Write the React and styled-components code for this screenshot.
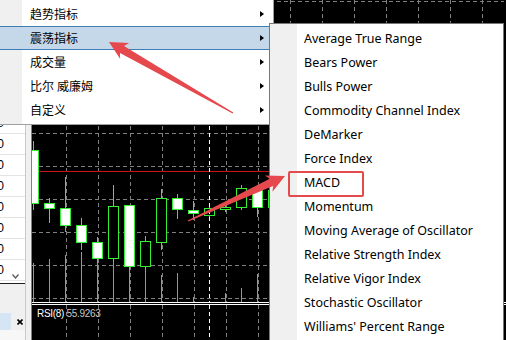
import React from 'react';
import styled, { createGlobalStyle, css } from 'styled-components';

const GlobalStyle = createGlobalStyle`
  html, body {
    margin: 0;
    padding: 0;
    background: #f0f0f0;
  }
  * { box-sizing: border-box; }
`;

const Screen = styled.div`
  position: relative;
  width: 506px;
  height: 340px;
  overflow: hidden;
  font-family: "Noto Sans", "Noto Sans CJK SC", sans-serif;
`;

const Workspace = styled.div`
  display: flex;
  height: 100%;
`;

/* left navigator pane, mostly cut off */
const SidePane = styled.div`
  width: 26px;
  display: flex;
  flex-direction: column;
  background: #f0f0f0;
  border-right: 1px solid #c9c9c9;
`;

const PriceList = styled.div`
  position: relative;
  height: 284px;
  padding-top: 113px;
  background: #fff;
  border-bottom: 1px solid #1e1e1e;
  overflow: hidden;
`;

const PriceRow = styled.div`
  height: 21px;
  display: flex;
  align-items: center;
  justify-content: flex-end;
  padding-right: 21px;
  border-bottom: 1px solid #e3e3e3;
  font: 12px "Liberation Sans", sans-serif;
  color: #000;
  white-space: nowrap;
`;

const ScrollDown = styled.svg`
  position: absolute;
  right: 6px;
  bottom: 4px;
`;

const TabStrip = styled.div`
  flex: 1;
  display: flex;
  flex-direction: column;
  padding-top: 29px;
`;

const Tab = styled.div`
  height: 17px;
  display: flex;
  align-items: center;
  gap: 6px;
`;

const TabBox = styled.div`
  width: 11px;
  height: 100%;
  background: #d5e5f4;
`;

const TabFoot = styled.div`
  flex: 1;
  background: #f7f7f7;
`;

const Splitter = styled.div`
  width: 5px;
  background: #f0f0f0;
`;

const ChartFrame = styled.div`
  flex: 1;
  display: flex;
  flex-direction: column;
  background: #000;
  border-left: 1px solid #7f7f7f;
`;

const MainChart = styled.div`
  height: 303px;
  border-bottom: 1px solid #fff;
  svg { display: block; }
`;

const RsiPane = styled.div`
  position: relative;
  flex: 1;
  margin-top: 1px;
  border-top: 1px solid #fff;
  svg { display: block; }
`;

const RsiLabel = styled.span`
  position: absolute;
  left: 5px;
  top: 3px;
  font: 10px "Liberation Sans", sans-serif;
  letter-spacing: -0.3px;
  color: #fff;
  span { color: #c8c8c8; }
`;

/* context menus */
const Menu = styled.ul`
  position: absolute;
  left: ${p => p.$left}px;
  top: ${p => p.$top}px;
  width: ${p => p.$width}px;
  margin: 0;
  padding: 2px 0;
  list-style: none;
  background: linear-gradient(to right, #f0f0f0 ${p => p.$gutter}px, #fff ${p => p.$gutter}px);
  ${p => p.$sub
    ? css`border: 1px solid #777;`
    : css`
      border-right: 1px solid #a0a0a0;
      border-bottom: 1px solid #a0a0a0;
    `}
`;

const MenuItem = styled.li`
  position: relative;
  height: 24px;
  display: flex;
  align-items: center;
  padding-left: ${p => p.$indent}px;
  padding-right: 9px;
  font-size: ${p => p.$size}px;
  color: #000;
  white-space: nowrap;
  ${p => p.$active && css`
    background: #c5d8ea;
    border-top: 1px solid #3d7eb3;
    border-bottom: 1px solid #3d7eb3;
  `}
  ${p => p.$marked && css`
    &::after {
      content: "";
      position: absolute;
      left: 18px;
      top: 1px;
      width: 72px;
      height: 22px;
      border: 2.5px solid #e34a4c;
      border-radius: 2px;
    }
  `}
`;

const SubArrow = styled.i`
  margin-left: auto;
  width: 0;
  height: 0;
  border-left: 4px solid #000;
  border-top: 3.5px solid transparent;
  border-bottom: 3.5px solid transparent;
`;

const Annotations = styled.svg`
  position: absolute;
  left: 0;
  top: 0;
  pointer-events: none;
`;

const prices = ['1.32480', '1.32450', '1.32420', '1.32390', '1.32360', '1.32330', '1.32300', '1.32270', '1.32240'];

const groups = [
  { label: '趋势指标' },
  { label: '震荡指标', active: true },
  { label: '成交量' },
  { label: '比尔 威廉姆' },
  { label: '自定义' },
];

const oscillators = [
  'Average True Range',
  'Bears Power',
  'Bulls Power',
  'Commodity Channel Index',
  'DeMarker',
  'Force Index',
  'MACD',
  'Momentum',
  'Moving Average of Oscillator',
  'Relative Strength Index',
  'Relative Vigor Index',
  'Stochastic Oscillator',
  "Williams' Percent Range",
];

// c: centre x, hi/lo: wick, top/bot: body, up: hollow white body
const candles = [
  { c: 33, hi: 141, lo: 210, top: 150, bot: 203, up: true },
  { c: 49, hi: 198, lo: 223, top: 203, bot: 208, up: true },
  { c: 65, hi: 177, lo: 232, top: 208, bot: 225, up: true },
  { c: 81, hi: 218, lo: 250, top: 225, bot: 242, up: true },
  { c: 97, hi: 237, lo: 262, top: 242, bot: 258, up: true },
  { c: 113, hi: 185, lo: 262, top: 206, bot: 258, up: false },
  { c: 129, hi: 205, lo: 270, top: 205, bot: 266, up: true },
  { c: 145, hi: 236, lo: 270, top: 241, bot: 266, up: false },
  { c: 161, hi: 189, lo: 250, top: 198, bot: 242, up: false },
  { c: 177, hi: 194, lo: 219, top: 198, bot: 209, up: true },
  { c: 193, hi: 201, lo: 220, top: 210, bot: 213, up: true },
  { c: 209, hi: 205, lo: 218, top: 208, bot: 215, up: false },
  { c: 225, hi: 204, lo: 212, top: 207, bot: 209, up: false },
  { c: 241, hi: 185, lo: 210, top: 188, bot: 207, up: false },
  { c: 257, hi: 185, lo: 217, top: 190, bot: 207, up: true },
  { c: 273, hi: 180, lo: 215, top: 190, bot: 207, up: false },
];

const volumes = [[33, 263], [49, 259], [65, 255], [81, 252], [97, 258], [113, 258], [129, 266], [145, 266],
  [161, 275], [177, 273], [193, 297], [225, 293], [241, 288], [257, 274]];

const gridX = Array.from({ length: 14 }, (_, i) => 66 + i * 32);
const gridY = Array.from({ length: 10 }, (_, i) => 1 + i * 33);

function arrowPoints([sx, sy], [tx, ty], head = 18, wing = 9, neck = 4, tail = 0.6, notch = 3) {
  const len = Math.hypot(tx - sx, ty - sy);
  const ux = (tx - sx) / len, uy = (ty - sy) / len;
  const nx = -uy, ny = ux;
  const p = (d, w) => [tx - ux * d + nx * w, ty - uy * d + ny * w];
  return [
    [tx, ty], p(head, wing), p(head - notch, neck),
    [sx + nx * tail, sy + ny * tail], [sx - nx * tail, sy - ny * tail],
    p(head - notch, -neck), p(head, -wing),
  ].map(q => q.map(v => v.toFixed(1)).join(',')).join(' ');
}

function CandleChart() {
  return (
    <svg width="472" height="302" viewBox="32 0 472 302" shapeRendering="crispEdges">
      {gridY.map(y => (
        <line key={y} x1="32" x2="504" y1={y + 0.5} y2={y + 0.5} stroke="#808080" strokeDasharray="4 3" />
      ))}
      {gridX.map(x => (
        <line key={x} x1={x + 0.5} x2={x + 0.5} y1="0" y2="302" stroke="#808080" strokeDasharray="4 3" />
      ))}
      <line x1="32" x2="504" y1="171.5" y2="171.5" stroke="#c81414" />
      {volumes.map(([x, y]) => (
        <line key={x} x1={x + 0.5} x2={x + 0.5} y1={y} y2="302" stroke="#3fd43f" />
      ))}
      {candles.map(k => (
        <g key={k.c} stroke="#33f033">
          <line x1={k.c + 0.5} x2={k.c + 0.5} y1={k.hi} y2={k.lo} />
          <rect x={k.c - 5 + 0.5} y={k.top + 0.5} width="10" height={Math.max(k.bot - k.top, 1)}
            fill={k.up ? '#fff' : '#000'} />
        </g>
      ))}
      <line x1="209.5" x2="209.5" y1="0" y2="302" stroke="#fff" strokeDasharray="4 3" />
    </svg>
  );
}

function RsiGrid() {
  return (
    <svg width="472" height="34" viewBox="32 306 472 34" shapeRendering="crispEdges">
      {gridX.map(x => (
        <line key={x} x1={x + 0.5} x2={x + 0.5} y1="306" y2="340" stroke="#808080" strokeDasharray="4 3" />
      ))}
      <line x1="209.5" x2="209.5" y1="306" y2="340" stroke="#fff" strokeDasharray="4 3" />
    </svg>
  );
}

export default function App() {
  return (
    <Screen>
      <GlobalStyle />
      <Workspace>
        <SidePane>
          <PriceList>
            {prices.map(p => <PriceRow key={p}>{p}</PriceRow>)}
            <ScrollDown width="7" height="5" viewBox="0 0 7 5">
              <polyline points="0.5,0.5 3.5,4 6.5,0.5" fill="none" stroke="#555" strokeWidth="1.2" />
            </ScrollDown>
          </PriceList>
          <TabStrip>
            <Tab>
              <TabBox />
              <svg width="6" height="6" viewBox="0 0 6 6">
                <path d="M0.5 0.5L5.5 5.5M5.5 0.5L0.5 5.5" stroke="#000" strokeWidth="1.6" />
              </svg>
            </Tab>
            <TabFoot />
          </TabStrip>
        </SidePane>
        <Splitter />
        <ChartFrame>
          <MainChart>
            <CandleChart />
          </MainChart>
          <RsiPane>
            <RsiGrid />
            <RsiLabel>RSI(8) <span>55.9263</span></RsiLabel>
          </RsiPane>
        </ChartFrame>
      </Workspace>

      <Menu $left={0} $top={0} $width={274} $gutter={22}>
        {groups.map(g => (
          <MenuItem key={g.label} $indent={30} $size={12} $active={g.active}>
            {g.label}
            <SubArrow />
          </MenuItem>
        ))}
      </Menu>

      <Menu $sub $left={269} $top={23} $width={235} $gutter={27}>
        {oscillators.map(name => (
          <MenuItem key={name} $indent={34} $size={12.5} $marked={name === 'MACD'}>
            {name}
          </MenuItem>
        ))}
      </Menu>

      <Annotations width="506" height="340">
        <polygon points={arrowPoints([233, 113], [109, 42])} fill="#e5484d" />
        <polygon points={arrowPoints([188, 221], [285, 176])} fill="#e5484d" />
      </Annotations>
    </Screen>
  );
}
